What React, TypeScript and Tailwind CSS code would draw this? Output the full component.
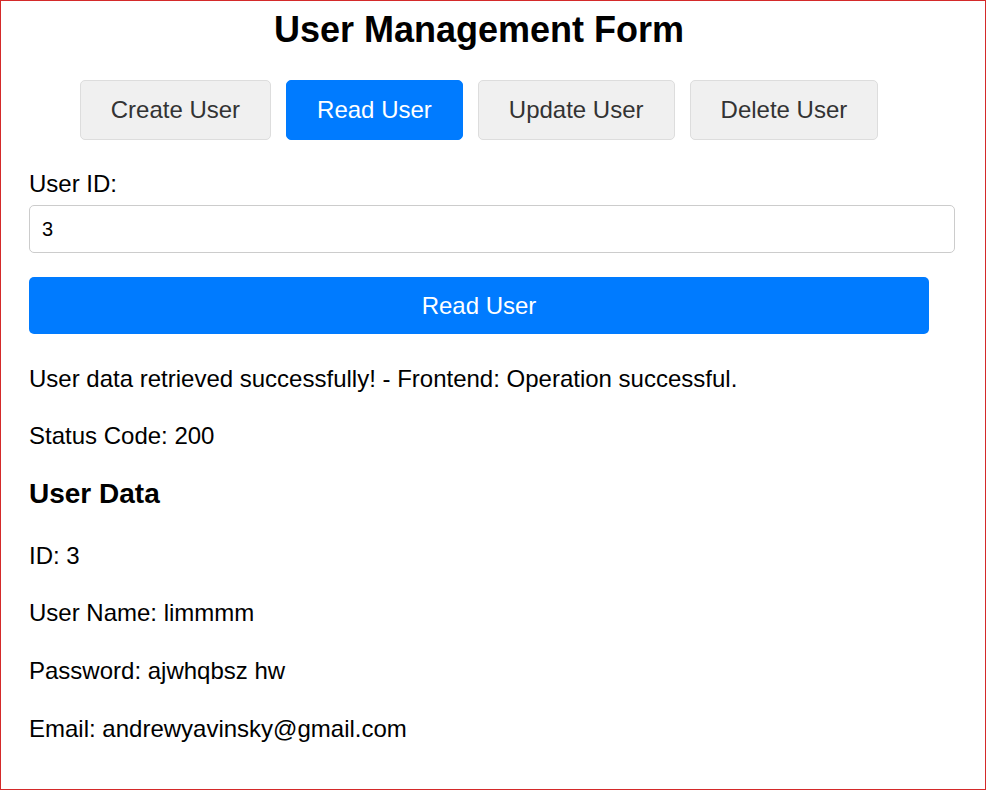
import { useState } from 'react';

const tabs = ['Create User', 'Read User', 'Update User', 'Delete User'];

export default function App() {
  const [active, setActive] = useState('Read User');
  const [userId, setUserId] = useState('3');

  const user = {
    id: 3,
    userName: 'limmmm',
    password: 'ajwhqbsz hw',
    email: 'andrewyavinsky@gmail.com',
  };

  return (
    <div
      className="min-h-[790px] border border-[#d42a2a] bg-white text-black"
      style={{ fontFamily: '"Liberation Sans", Arial, sans-serif' }}
    >
      <div className="ml-[28px] w-[900px] pt-[9px]">
        {/* Header */}
        <h1 className="text-center text-[36px] font-bold leading-[40px]">User Management Form</h1>

        {/* Tabs */}
        <div className="mt-[30px] flex justify-center gap-[15px]">
          {tabs.map(tab => (
            <button
              key={tab}
              onClick={() => setActive(tab)}
              className={`h-[60px] rounded-[5px] border px-[30px] text-[24px] leading-[28px] ${
                active === tab
                  ? 'border-[#007bff] bg-[#007bff] text-white'
                  : 'border-[#dddddd] bg-[#f0f0f0] text-[#333333]'
              }`}
            >
              {tab}
            </button>
          ))}
        </div>

        {/* Form */}
        <label className="mt-[30px] block text-[24px] leading-[28px]">User ID:</label>
        <input
          value={userId}
          onChange={e => setUserId(e.target.value)}
          className="mt-[7px] block h-[48px] w-[926px] rounded-[5px] border border-[#cccccc] px-[12px] text-[20px] outline-none"
        />
        <button className="mt-[24px] block h-[57px] w-[900px] rounded-[5px] bg-[#007bff] text-[24px] text-white">
          Read User
        </button>

        {/* Result */}
        <p className="mt-[31px] text-[24px] leading-[28px]">
          User data retrieved successfully! - Frontend: Operation successful.
        </p>
        <p className="mt-[29px] text-[24px] leading-[28px]">Status Code: 200</p>

        <h3 className="mt-[28px] text-[28px] font-bold leading-[32px]">User Data</h3>
        <p className="mt-[32px] text-[24px] leading-[28px]">ID: {user.id}</p>
        <p className="mt-[29px] text-[24px] leading-[28px]">User Name: {user.userName}</p>
        <p className="mt-[30px] text-[24px] leading-[28px]">Password: {user.password}</p>
        <p className="mt-[30px] text-[24px] leading-[28px]">Email: {user.email}</p>
      </div>
    </div>
  );
}
